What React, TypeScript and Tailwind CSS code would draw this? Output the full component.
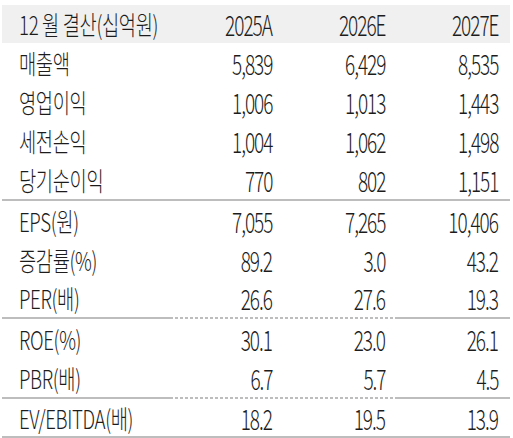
const font = "font-['Noto_Sans_CJK_KR','Noto_Sans',sans-serif]";

type Row = { label: string; v: [string, string, string]; h: string };

const groups: Row[][] = [
  [
    { label: '매출액', v: ['5,839', '6,429', '8,535'], h: 'h-[39px]' },
    { label: '영업이익', v: ['1,006', '1,013', '1,443'], h: 'h-[39px]' },
    { label: '세전손익', v: ['1,004', '1,062', '1,498'], h: 'h-[39px]' },
    { label: '당기순이익', v: ['770', '802', '1,151'], h: 'h-[39px]' },
  ],
  [
    { label: 'EPS(원)', v: ['7,055', '7,265', '10,406'], h: 'h-[39px]' },
    { label: '증감률(%)', v: ['89.2', '3.0', '43.2'], h: 'h-[39px]' },
    { label: 'PER(배)', v: ['26.6', '27.6', '19.3'], h: 'h-[38px]' },
  ],
  [
    { label: 'ROE(%)', v: ['30.1', '23.0', '26.1'], h: 'h-[39px]' },
    { label: 'PBR(배)', v: ['6.7', '5.7', '4.5'], h: 'h-[39px]' },
  ],
  [{ label: 'EV/EBITDA(배)', v: ['18.2', '19.5', '13.9'], h: 'h-[37px]' }],
];

const Label = ({ children }: { children: string }) => (
  <div className="w-[157px] pl-[17px] flex items-center">
    <span className="inline-block whitespace-nowrap origin-left scale-x-[0.72] text-[26px] tracking-[-0.5px]">{children}</span>
  </div>
);

const Num = ({ children }: { children: string }) => (
  <div className="w-[113px] flex items-center justify-end">
    <span className="inline-block whitespace-nowrap origin-right scale-x-[0.68] text-[28px] tracking-[-1.5px]">{children}</span>
  </div>
);

const Solid = () => <div className="h-[2px] w-full bg-[#bdbdbd]" />;

// solid - dashed - solid, as in the source table
const Mixed = () => (
  <div className="flex h-[2px] w-full">
    <div className="w-[168px] bg-[#bdbdbd]" />
    <div className="w-[227px] bg-[repeating-linear-gradient(to_right,#bdbdbd_0_3px,transparent_3px_5px)]" />
    <div className="flex-1 bg-[#bdbdbd]" />
  </div>
);

const TableRow = ({ row }: { row: Row }) => (
  <div className={`flex ${row.h}`}>
    <Label>{row.label}</Label>
    {row.v.map((x, i) => (
      <Num key={i}>{x}</Num>
    ))}
  </div>
);

const App = () => {
  return (
    <div className={`w-[513px] h-[438px] bg-white pt-[5px] px-[2px] leading-none font-light text-[#1c1c1c] overflow-hidden ${font}`}>
      <div className="w-[508px]">
        {/* Header */}
        <div className="flex h-[38px] bg-[#f0f0f0]">
          <Label>12 월 결산(십억원)</Label>
          <Num>2025A</Num>
          <Num>2026E</Num>
          <Num>2027E</Num>
        </div>

        {groups[0].map((r) => <TableRow key={r.label} row={r} />)}
        <Solid />
        {groups[1].map((r) => <TableRow key={r.label} row={r} />)}
        <Mixed />
        {groups[2].map((r) => <TableRow key={r.label} row={r} />)}
        <Mixed />
        {groups[3].map((r) => <TableRow key={r.label} row={r} />)}
        <Solid />
      </div>
    </div>
  );
};

export default App;
